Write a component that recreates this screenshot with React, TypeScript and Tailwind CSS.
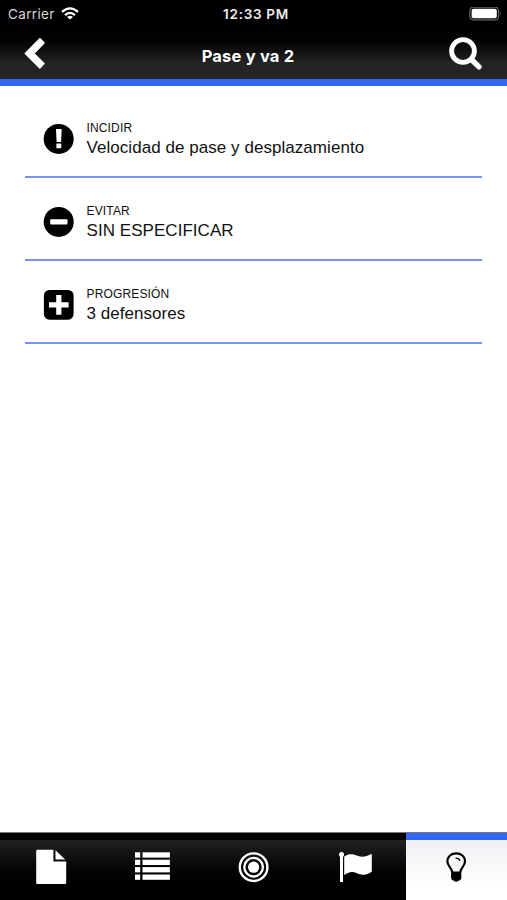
import React from 'react';

interface NoteRowProps {
  icon: React.ReactNode;
  label: string;
  value: string;
}

function NoteRow({ icon, label, value }: NoteRowProps) {
  return (
    <li className="flex h-[83px] items-start border-b-2 border-[#7593f0] pl-[18px] pt-[26px]">
      <div className="mt-[2px] h-[31px] w-[31px] shrink-0">{icon}</div>
      <div className="ml-[12.5px]">
        <p className="h-[14px] text-[12px] leading-[14px] tracking-[0.15px]">{label}</p>
        <p className="mt-[3px] whitespace-nowrap text-[17px] leading-[20px] tracking-[0.05px]">{value}</p>
      </div>
    </li>
  );
}

const notes: NoteRowProps[] = [
  {
    label: 'INCIDIR',
    value: 'Velocidad de pase y desplazamiento',
    icon: (
      <svg viewBox="0 0 31 31" className="h-full w-full">
        <circle cx="15.7" cy="15.9" r="15" fill="#000" />
        <path d="M13 5.9H18.7L18.1 18.9H13.6Z" fill="#fff" />
        <rect x="13.4" y="20.6" width="4.9" height="4.7" rx="0.6" fill="#fff" />
      </svg>
    ),
  },
  {
    label: 'EVITAR',
    value: 'SIN ESPECIFICAR',
    icon: (
      <svg viewBox="0 0 31 31" className="h-full w-full">
        <circle cx="15.7" cy="15.9" r="15" fill="#000" />
        <rect x="7.2" y="13.3" width="17.3" height="5.2" rx="0.9" fill="#fff" />
      </svg>
    ),
  },
  {
    label: 'PROGRESIÓN',
    value: '3 defensores',
    icon: (
      <svg viewBox="0 0 31 31" className="h-full w-full">
        <rect x="0.9" y="1" width="29.7" height="29.7" rx="5.5" fill="#000" />
        <path d="M13.2 6H18.4V13.3H25.6V18.4H18.4V25.7H13.2V18.4H6V13.3H13.2Z" fill="#fff" />
      </svg>
    ),
  },
];

function StatusBar() {
  return (
    <div className="grid h-7 grid-cols-3 items-center leading-7">
      <div className="flex items-center pl-[8px] font-['Inter'] text-[13.5px] tracking-[0.35px] text-[#d6d6d6]">
        <span>Carrier</span>
        <svg viewBox="0 0 18 14" className="ml-[6px] h-[14px] w-[18px]" fill="none" stroke="#fff" strokeWidth="2.3">
          <path d="M1 4.9Q9 -2.1 17 4.9" />
          <path d="M4 8.2Q9 3.6 14 8.2" />
          <path d="M9 12.6L6 9.9Q9 7.5 12 9.9Z" fill="#fff" stroke="none" />
        </svg>
      </div>
      <div className="whitespace-nowrap pl-[5px] text-center font-['Inter'] text-[13.5px] font-semibold tracking-[0.7px] text-[#eee]">
        12:33 PM
      </div>
      <div className="flex justify-end pr-[5px]">
        <svg viewBox="0 0 33 14" className="h-[14px] w-[33px]">
          <rect x="0.8" y="0.1" width="28.8" height="12.8" rx="3.8" fill="none" stroke="#666" strokeWidth="1.2" />
          <rect x="2.6" y="1.8" width="25.2" height="9.4" rx="2" fill="#fff" />
          <path d="M31 4.1Q32.8 6.5 31 8.9Z" fill="#777" />
        </svg>
      </div>
    </div>
  );
}

function Header() {
  return (
    <header className="h-[86px] border-b-[7px] border-[#3366f4] bg-linear-to-b from-black from-32% to-[#242424] to-80% text-white">
      <StatusBar />
      <div className="flex h-[51px] items-center justify-between px-[24px]">
        <button type="button" aria-label="Atrás">
          <svg viewBox="0 0 34 34" className="h-[34px] w-[34px]">
            <path
              d="M16.3 1.3L20.4 5.5Q20.7 6 20.2 6.5L10.6 16.4L20.2 26Q20.7 26.6 20.2 27.1L16.4 31.2Q15.9 31.6 15.4 31.2L1.1 17Q0.6 16.4 1.1 15.9L15.4 1.4Q15.9 1 16.3 1.3Z"
              fill="#fff"
              stroke="#fff"
              strokeWidth="0.6"
            />
          </svg>
        </button>
        <h1 className="mr-[11px] mt-[5px] whitespace-nowrap font-['Inter'] text-[16.5px] font-bold tracking-[0.2px]">
          Pase y va 2
        </h1>
        <button type="button" aria-label="Buscar">
          <svg viewBox="0 0 34 34" className="h-[34px] w-[34px]" fill="none" stroke="#fff">
            <circle cx="14" cy="14" r="11.4" strokeWidth="4.9" />
            <path d="M22.6 22.7L30 29.9" strokeWidth="5.4" strokeLinecap="round" />
          </svg>
        </button>
      </div>
    </header>
  );
}

const tabs = [
  {
    name: 'Ficha',
    icon: (
      <svg viewBox="0 0 32 36" className="h-[36px] w-[32px]" fill="#fff">
        <path d="M2.4 0.7H18.4V12.6H31.2V34.1Q31.2 35.1 30.2 35.1H2.4Q1.2 35.1 1.2 34.1V1.7Q1.2 0.7 2.4 0.7Z" />
        <path d="M20.5 1.2L30.2 10.4H20.5Z" />
      </svg>
    ),
  },
  {
    name: 'Lista',
    icon: (
      <svg viewBox="0 0 36 30" className="h-[30px] w-[36px]" fill="#fff">
        {[0.3, 7.7, 15.1, 22.5].map((y) => (
          <g key={y}>
            <rect x="0" y={y} width="5.2" height="5.3" />
            <rect x="7.5" y={y} width="27.4" height="5.3" />
          </g>
        ))}
      </svg>
    ),
  },
  {
    name: 'Objetivos',
    icon: (
      <svg viewBox="0 0 32 32" className="h-[32px] w-[32px]" fill="none" stroke="#fff" strokeWidth="2.4">
        <circle cx="15.6" cy="16.2" r="13.8" />
        <circle cx="15.6" cy="16.2" r="9.3" />
        <circle cx="15.6" cy="16.2" r="5.6" fill="#fff" stroke="none" />
      </svg>
    ),
  },
  {
    name: 'Reglas',
    icon: (
      <svg viewBox="0 0 34 32" className="h-[32px] w-[34px]" fill="#fff">
        <circle cx="3.5" cy="3.4" r="2.5" />
        <rect x="2" y="3" width="3" height="28" rx="0.6" />
        <path d="M6.2 5.5C11.5 2 15.5 3.2 19.5 4.7C24.5 6.7 28.5 5.5 32.6 3.2Q33.8 2.8 33.8 4V20.8C28.5 24.6 24 24.3 19 22.2C13.5 19.9 10 21.5 6.2 24.2Z" />
      </svg>
    ),
  },
  {
    name: 'Notas',
    icon: (
      <svg viewBox="0 0 22 32" className="h-[32px] w-[22px]" fill="none" stroke="#000">
        <path
          d="M6.2 21.4C6.2 16.8 1.4 15.3 1.4 10.6C1.4 5.3 5.4 2.3 10.2 2.3C15 2.3 19 5.3 19 10.6C19 15.3 14.3 16.8 14.3 21.4"
          strokeWidth="2.2"
        />
        <path d="M9.6 7.1Q13 7 14.1 9.8" strokeWidth="1.4" />
        <path d="M5.1 20.4H15.3V27.2Q15.1 29 12.6 29.7Q10.2 31.6 7.8 29.7Q5.3 29 5.1 27.2Z" fill="#000" stroke="none" />
      </svg>
    ),
  },
];

function TabBar({ active }: { active: string }) {
  return (
    <nav className="grid h-[68px] grid-cols-[102px_101px_101px_102px_101px] border-t border-[#777] bg-black">
      {tabs.map((tab) => (
        <button
          key={tab.name}
          type="button"
          aria-label={tab.name}
          className={
            tab.name === active
              ? 'flex h-[67px] items-center justify-center border-t-[7px] border-[#3366f4] bg-linear-to-b from-[#eef0f3] to-white to-80% pb-[7px]'
              : 'flex h-[67px] items-center justify-center border-t-[7px] border-black bg-linear-to-b from-[#222] to-black to-90% pb-[7px]'
          }
        >
          {tab.icon}
        </button>
      ))}
    </nav>
  );
}

export default function App() {
  return (
    <div className="flex h-[900px] w-[507px] flex-col overflow-hidden bg-white font-['Liberation_Sans',sans-serif] text-[#111]">
      <Header />
      <main className="flex-1 px-[25px] pt-[9px]">
        <ul>
          {notes.map((note) => (
            <NoteRow key={note.label} {...note} />
          ))}
        </ul>
      </main>
      <TabBar active="Notas" />
    </div>
  );
}
